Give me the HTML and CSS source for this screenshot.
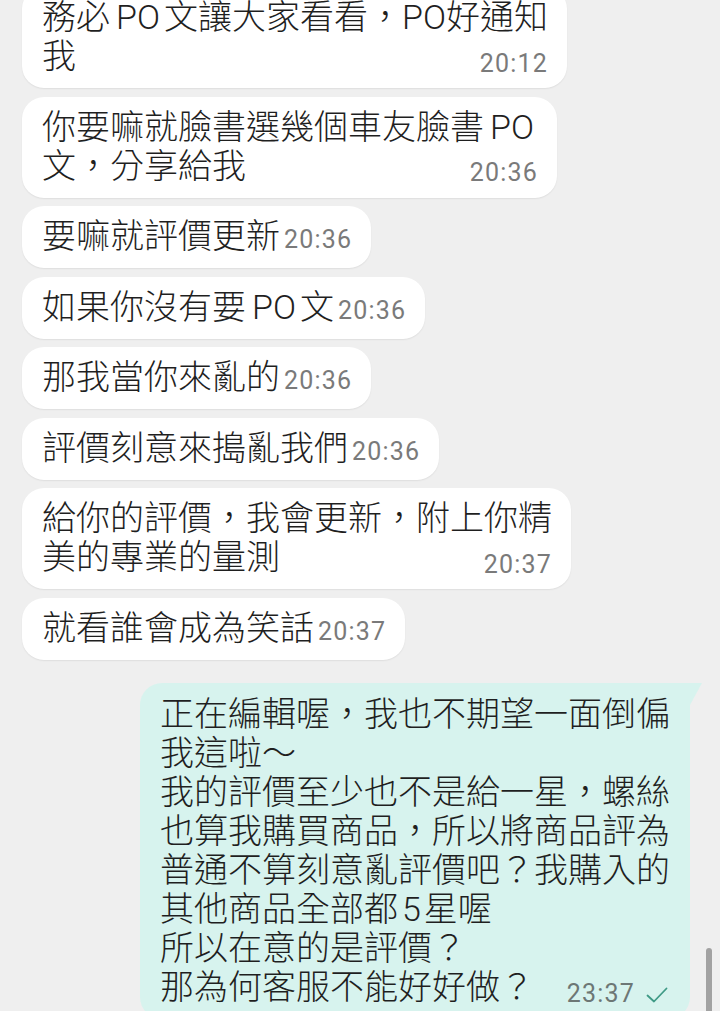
FILE: index.html
```html
<!DOCTYPE html>
<html lang="zh-Hant">
<head>
<meta charset="utf-8">
<title>Chat</title>
<link rel="stylesheet" href="styles.css">
</head>
<body>
<main class="chat">
  <div class="msg in multi">
    <p class="text">務必<span class="lat">PO</span>文讓大家看看，PO好通知<br>我</p>
    <span class="time">20:12</span>
  </div>
  <div class="msg in multi">
    <p class="text">你要嘛就臉書選幾個車友臉書<span class="lat">PO</span><br>文，分享給我</p>
    <span class="time">20:36</span>
  </div>
  <div class="msg in">
    <p class="text">要嘛就評價更新</p>
    <span class="time">20:36</span>
  </div>
  <div class="msg in">
    <p class="text">如果你沒有要<span class="lat">PO</span>文</p>
    <span class="time">20:36</span>
  </div>
  <div class="msg in">
    <p class="text">那我當你來亂的</p>
    <span class="time">20:36</span>
  </div>
  <div class="msg in">
    <p class="text">評價刻意來搗亂我們</p>
    <span class="time">20:36</span>
  </div>
  <div class="msg in multi">
    <p class="text">給你的評價，我會更新，附上你精<br>美的專業的量測</p>
    <span class="time">20:37</span>
  </div>
  <div class="msg in">
    <p class="text">就看誰會成為笑話</p>
    <span class="time">20:37</span>
  </div>
  <div class="msg out multi">
    <p class="text">正在編輯喔，我也不期望一面倒偏<br>我這啦～<br>我的評價至少也不是給一星，螺絲<br>也算我購買商品，所以將商品評為<br>普通不算刻意亂評價吧？我購入的<br>其他商品全部都<span class="num">5</span>星喔<br>所以在意的是評價？<br>那為何客服不能好好做？</p>
    <span class="time">23:37<svg class="check" viewBox="0 0 22 20" width="22" height="20"><polyline points="1.5,10.5 8,16.5 20.5,3.5" fill="none" stroke="#3f9a86" stroke-width="1.8" stroke-linecap="round" stroke-linejoin="round"/></svg></span>
  </div>
</main>
<div class="scrollbar"></div>
</body>
</html>
```

FILE: styles.css
```css
html, body {
  margin: 0;
  padding: 0;
}

body {
  width: 720px;
  height: 1011px;
  overflow: hidden;
  background: #efefef;
  font-family: Roboto, "Noto Sans CJK TC", "Noto Sans CJK SC", sans-serif;
  color: #1f1f1f;
  position: relative;
}

.chat {
  display: flex;
  flex-direction: column;
  align-items: flex-start;
  gap: 8.5px;
  margin-top: -13px;
  padding: 0 30px 0 22px;
}

.msg {
  display: flex;
  align-items: baseline;
  gap: 4px;
  padding: 11px 19px 12px 20px;
  border-radius: 22px;
}

.msg.in {
  background: #ffffff;
  box-shadow: 0 1px 1.5px rgba(0, 0, 0, 0.07);
}

.text {
  margin: 0;
  font-size: 34px;
  font-weight: 300;
  line-height: 39px;
  white-space: nowrap;
}

.lat {
  margin: 0 4px 0 6px;
}

.num {
  margin: 0 3px 0 4px;
}

.time {
  font-size: 25px;
  line-height: 30px;
  letter-spacing: 1.2px;
  color: #7a7a7a;
  white-space: nowrap;
}

.msg.multi {
  display: grid;
}

.msg.multi .text,
.msg.multi .time {
  grid-area: 1 / 1;
}

.msg.multi .time {
  justify-self: end;
  align-self: end;
  margin-bottom: -2.5px;
}

.msg.out {
  align-self: flex-end;
  position: relative;
  margin-top: 15px;
  background: #d7f3ee;
  border-radius: 22px 0 22px 22px;
  padding: 11.5px 20px 12px 20px;
}

.msg.out::after {
  content: "";
  position: absolute;
  top: 0;
  right: -12px;
  width: 12px;
  height: 22px;
  background: #d7f3ee;
  clip-path: polygon(0 0, 100% 0, 0 100%);
}

.msg.out .time {
  color: #6d7775;
  display: inline-flex;
  align-items: center;
  gap: 11px;
  margin-right: 2px;
}

.check {
  display: block;
  margin-top: 2px;
}

.scrollbar {
  position: absolute;
  right: 8px;
  top: 948px;
  width: 6px;
  height: 80px;
  border-radius: 3px;
  background: #a2a2a2;
}
```
